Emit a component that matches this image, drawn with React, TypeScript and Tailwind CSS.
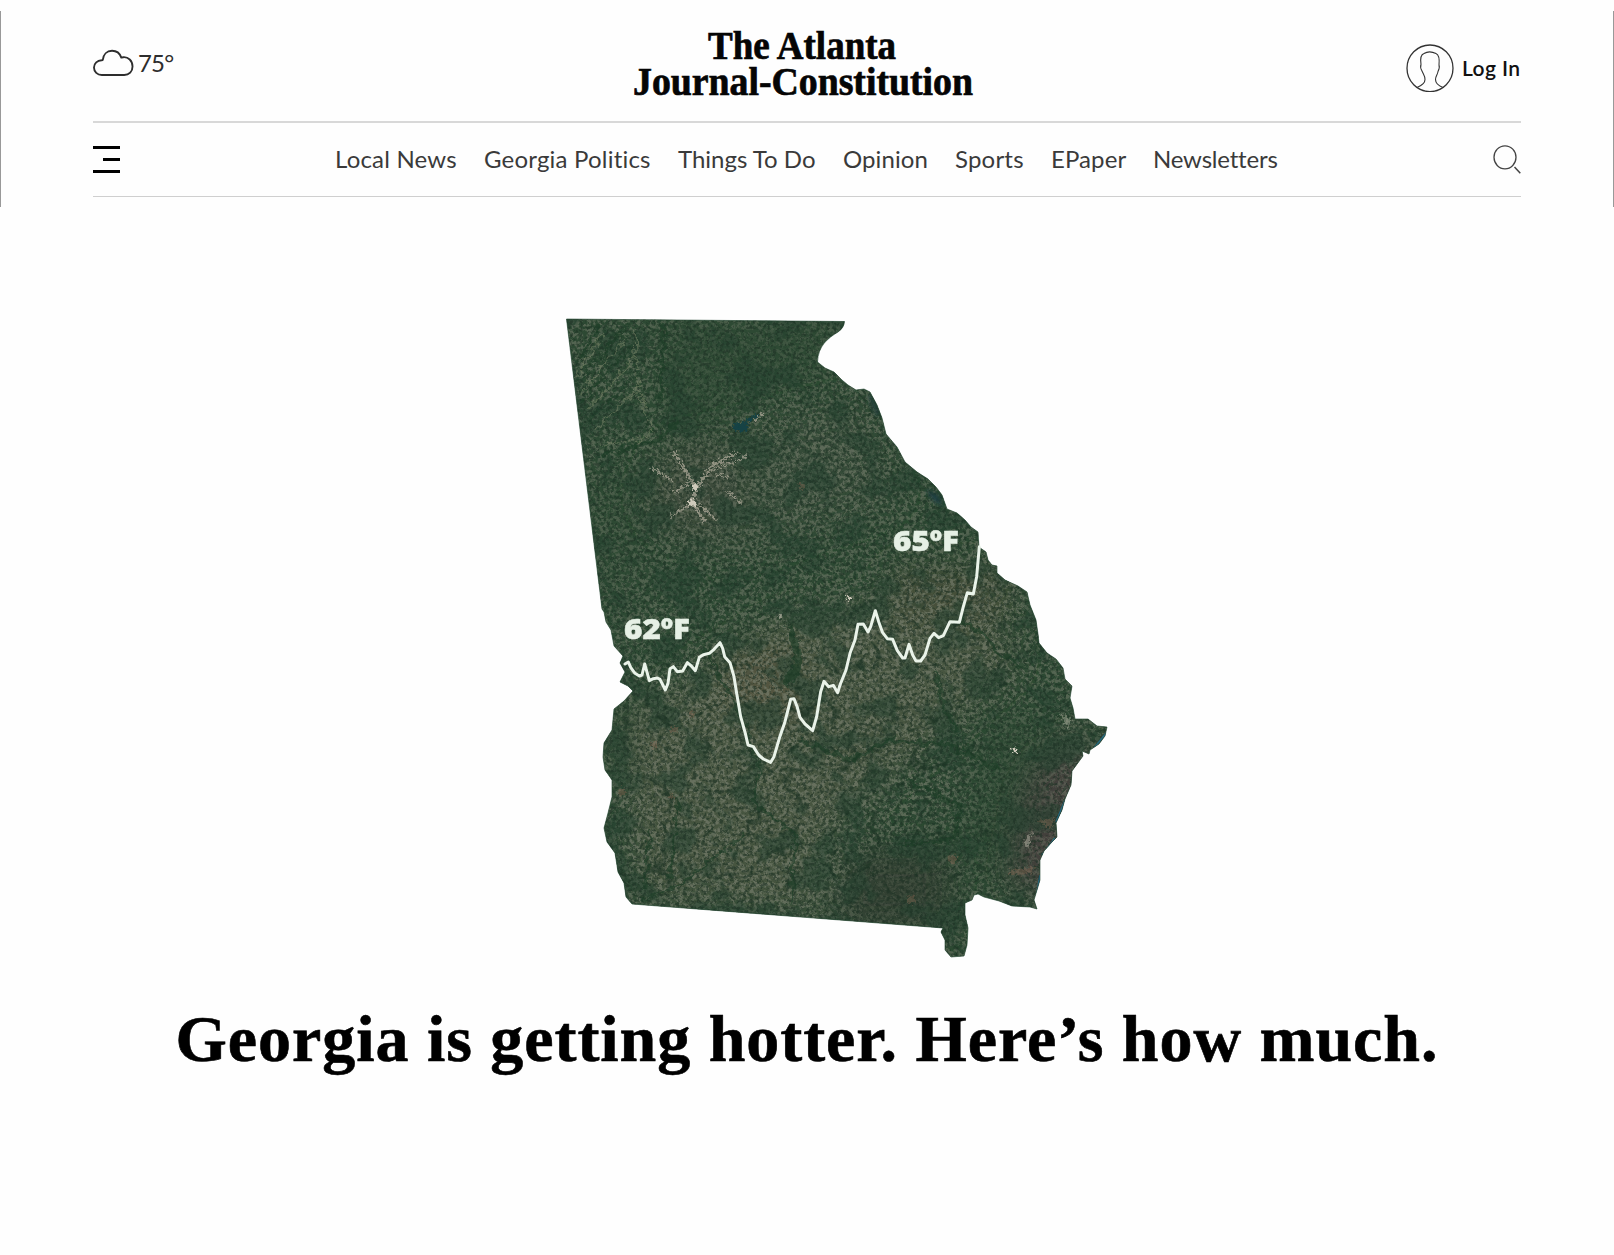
import React from 'react';

const NAV: { label: string; width: string; spacing: string }[] = [
  { label: 'Local News', width: 'w-[122px]', spacing: 'tracking-[0.2px]' },
  { label: 'Georgia Politics', width: 'w-[167px]', spacing: 'tracking-[0.2px]' },
  { label: 'Things To Do', width: 'w-[138px]', spacing: 'tracking-[0px]' },
  { label: 'Opinion', width: 'w-[85px]', spacing: 'tracking-[0.1px]' },
  { label: 'Sports', width: 'w-[69px]', spacing: 'tracking-[0.2px]' },
  { label: 'EPaper', width: 'w-[75px]', spacing: 'tracking-[0.1px]' },
  { label: 'Newsletters', width: 'w-[126px]', spacing: 'tracking-[-0.2px]' },
];

const STATE =
  'M566.5 319 L844.5 321.5 Q844 328 838 332 C828 338 818 346 817.5 362 L825 368 834 372 842 380 848 385 856 390 864 389 870 392 877 405 882 418 886 434 897 447 905 462 917 472 928 479 936 487 942 495 947 509 957 513 965 520 971 527 978 532 979 547 986 552 988 560 992 565 997 566 997 573 1005 580 1018 586 1027 592 1030 605 1036 620 1038 634 1039 643 1047 653 1056 659 1063 668 1065 679 1072 686 1070 698 1073 708 1075 719 1088 719 1097 726 1107 727 1105 736 1099 744 1090 750 1089 754 1082 751 1083 756 1072 771 1071 785 1065 799 1062 810 1056 823 1057 837 1052 842 1044 851 1040 860 1040 880 1034 900 1037 909 1030 907 1012 906 999 901 984 897 978 894 974 895 972 900 965 903 965 915 968 928 967 945 964 956 951 957 945 950 945 940 941 932 943 928 L632 904 626 897 624 883 618 872 615 853 607 842 604 828 608 813 612 797 612 780 605 770 603 757 604 743 612 730 614 709 624 701 633 691 628 686 620 682 625 672 620 663 623 656 614 646 611 630 606 622 604 612 602 609 Z';

const TREND =
  'M105 222 L115 216 122 232 135 250 148 258 156 255 164 222 172 250 178 272 190 266 202 264 210 268 226 300 234 280 240 236 250 230 262 245 278 243 292 218 304 228 316 242 328 202 340 194 358 190 372 178 390 158 398 175 404 200 420 218 432 260 440 310 452 380 466 430 474 465 490 470 506 495 520 507 542 517 552 500 568 445 585 395 602 328 612 326 622 352 630 382 645 402 668 422 680 380 692 305 702 274 716 290 730 286 743 308 750 285 768 240 780 190 795 150 804 103 820 102 834 126 842 110 856 62 866 95 878 128 892 146 908 148 922 182 938 204 945 204 957 163 968 195 978 213 992 213 1005 195 1020 145 1032 130 1046 143 1060 137 1080 95 1108 97 1120 50 1132 8 1150 12 1160 -40 1168 -130';

function GeorgiaMap() {
  return (
    <svg className="block h-[660px] w-[560px]" viewBox="556 309 560 660" role="img" aria-label="Georgia temperature map">
      <defs>
        <clipPath id="state">
          <path d={STATE} />
        </clipPath>
        <filter id="speckle" x="0" y="0" width="100%" height="100%" colorInterpolationFilters="sRGB">
          <feTurbulence type="fractalNoise" baseFrequency="0.24" numOctaves="4" seed="7" />
          <feColorMatrix values="0 0 0 0 0.46  0 0 0 0 0.49  0 0 0 0 0.42  5 0 0 0 -2.1" />
        </filter>
        <filter id="pits" x="0" y="0" width="100%" height="100%" colorInterpolationFilters="sRGB">
          <feTurbulence type="fractalNoise" baseFrequency="0.3" numOctaves="4" seed="21" />
          <feColorMatrix values="0 0 0 0 0.12  0 0 0 0 0.2  0 0 0 0 0.15  0 6 0 0 -3" />
        </filter>
        <filter id="patches" x="0" y="0" width="100%" height="100%" colorInterpolationFilters="sRGB">
          <feTurbulence type="fractalNoise" baseFrequency="0.03" numOctaves="5" seed="4" />
          <feColorMatrix values="0 0 0 0 0.15  0 0 0 0 0.26  0 0 0 0 0.19  0 0 8 0 -4" />
        </filter>
        <filter id="veins" x="0" y="0" width="100%" height="100%" colorInterpolationFilters="sRGB">
          <feTurbulence type="turbulence" baseFrequency="0.024" numOctaves="3" seed="12" />
          <feColorMatrix values="0 0 0 0 0.11  0 0 0 0 0.2  0 0 0 0 0.14  -14 0 0 0 1.8" />
        </filter>
        <filter id="soft" x="-50%" y="-50%" width="200%" height="200%">
          <feGaussianBlur stdDeviation="16" />
        </filter>
        <filter id="fine" x="-50%" y="-50%" width="200%" height="200%">
          <feGaussianBlur stdDeviation="2" />
        </filter>
        <filter id="rough" x="-20%" y="-20%" width="140%" height="140%">
          <feTurbulence type="fractalNoise" baseFrequency="0.14" numOctaves="3" seed="3" />
          <feDisplacementMap in="SourceGraphic" scale="13" xChannelSelector="R" yChannelSelector="G" />
        </filter>
        <filter id="grain" x="-20%" y="-20%" width="140%" height="140%">
          <feTurbulence type="fractalNoise" baseFrequency="0.4" numOctaves="2" seed="9" />
          <feDisplacementMap in="SourceGraphic" scale="9" xChannelSelector="R" yChannelSelector="G" />
        </filter>
        <mask id="density" maskUnits="userSpaceOnUse" x="556" y="309" width="560" height="660">
          <rect x="556" y="309" width="560" height="660" fill="#c4c4c4" />
          <g filter="url(#soft)">
            <path d="M665 320H845V370L760 390 690 440 660 400Z" fill="#5a5a5a" />
            <path d="M585 470H640V590H600Z" fill="#888" />
            <path d="M640 700L780 610 1010 560 1035 670 960 720 950 800 860 830 820 910 640 900 610 830Z" fill="#fff" />
            <path d="M860 850H950V930H840Z" fill="#4c4c4c" />
            <path d="M990 700L1060 740 1040 900 960 860Z" fill="#666" />
            <path d="M600 690H640V770H605Z" fill="#777" />
            <path d="M780 420L880 420 900 500 780 520Z" fill="#e0e0e0" />
          </g>
        </mask>
        <mask id="south" maskUnits="userSpaceOnUse" x="556" y="309" width="560" height="660">
          <path d="M610 690L760 620 1010 560 1040 690 980 900 620 900Z" fill="#fff" filter="url(#soft)" />
        </mask>
      </defs>

      <g clipPath="url(#state)">
        <rect x="556" y="309" width="560" height="660" fill="#2d4933" />
        <g filter="url(#soft)">
          <path d="M620 720L780 620 960 590 1020 660 930 740 830 830 820 910 640 900Z" fill="#46543f" />
          <path d="M730 650H800V720H730Z" fill="#52553f" />
          <path d="M660 450L860 400 900 500 720 560Z" fill="#344c38" />
          <circle cx="693" cy="492" r="46" fill="#3e4b3b" />
          <path d="M890 570H1010V620H890Z" fill="#474f3b" />
          <path d="M850 850H950V930H830Z" fill="#314031" />
          <path d="M1080 730L1090 790 1060 900 1010 880 1030 780Z" fill="#45413c" />
        </g>
        <g mask="url(#density)">
          <rect x="556" y="309" width="560" height="660" filter="url(#speckle)" opacity="0.7" />
        </g>
        <rect x="556" y="309" width="560" height="660" filter="url(#patches)" opacity="0.55" />
        <rect x="556" y="309" width="560" height="660" filter="url(#pits)" opacity="0.6" />
        <g mask="url(#south)">
          <rect x="556" y="309" width="560" height="660" filter="url(#veins)" opacity="0.6" />
        </g>

        <g fill="none" stroke="#1e3c28" strokeWidth="2.2" opacity="0.6" filter="url(#rough)">
          <path d="M572 370L600 325M577 385L620 330M582 400L632 345M590 420L640 370M600 360L628 325" />
          <path d="M600 455L655 442 680 420 M664 325L660 400" strokeWidth="4" />
          <path d="M700 640L745 725 760 770 752 800 795 835 792 905" strokeWidth="3" />
          <path d="M790 625L800 665 784 685" strokeWidth="9" />
          <path d="M800 740L850 760 890 740 950 745 1000 770" strokeWidth="4.5" />
          <path d="M960 620L985 635 1000 655 1022 665" strokeWidth="4.5" />
          <path d="M935 670L945 710 960 735" strokeWidth="4" />
          <path d="M640 900L680 885 710 860 745 835M645 890L650 830M670 880L678 800" strokeWidth="3" />
          <path d="M905 780L960 805 955 840 900 845" strokeWidth="3.5" />
        </g>
        <g fill="none" stroke="#7b8769" strokeWidth="1.5" opacity="0.5" filter="url(#rough)">
          <path d="M575 378L604 332M582 393L624 340M588 410L636 356M594 430L642 385M635 330L638 390 655 435M600 445L640 440 655 430" />
        </g>

        <ellipse cx="741" cy="427" rx="8" ry="5" fill="#174344" filter="url(#grain)" />
        <path d="M735 428L758 415" stroke="#174344" strokeWidth="3" filter="url(#grain)" />
        <path d="M926 490L936 494 944 506 934 501Z" fill="#1d3d42" filter="url(#fine)" />
        <path d="M870 396L878 415" stroke="#1d3a3e" strokeWidth="4" opacity="0.7" filter="url(#fine)" />

        <g fill="none" stroke="#a9a595" filter="url(#grain)" strokeLinecap="round" opacity="0.75">
          <path d="M674 452L686 472 697 488 692 503 704 520M697 488L712 466 736 453" strokeWidth="3" />
          <path d="M692 503L672 516M652 468L672 480M675 492L690 482M728 492L742 503M712 470L748 456M700 505L716 520M730 478L716 474M755 420L764 413" strokeWidth="1.8" />
        </g>
        <g fill="#cfcabb" filter="url(#grain)">
          <ellipse cx="692" cy="503" rx="4" ry="3.5" />
          <circle cx="695" cy="487" r="3" />
          <circle cx="849" cy="599" r="2" />
          <circle cx="1015" cy="750" r="2.5" />
          <path d="M1024 840L1032 832 1028 850Z" opacity="0.4" />
          <path d="M1058 713L1072 720 1068 728Z" opacity="0.35" />
          <circle cx="780" cy="616" r="2" opacity="0.6" />
        </g>
        <g fill="#8a6a55" filter="url(#grain)" opacity="0.4">
          <circle cx="692" cy="714" r="3" />
          <circle cx="674" cy="730" r="3.5" />
          <circle cx="655" cy="745" r="3.5" />
          <circle cx="622" cy="792" r="4" />
          <circle cx="671" cy="797" r="2.5" />
          <circle cx="953" cy="859" r="4.5" />
          <circle cx="911" cy="900" r="4" />
          <circle cx="802" cy="486" r="3" />
          <path d="M1010 870L1035 867 1030 874 1010 875ZM1037 821L1056 818 1050 828Z" />
        </g>
        <path d="M1107 732L1090 753M1065 800L1056 822M1055 838L1042 855M1040 875L1036 898" stroke="#1f6f92" strokeWidth="1.5" fill="none" opacity="0.8" />
      </g>
      <path d={STATE} fill="none" stroke="#22432f" strokeWidth="0.6" />

      <g transform="translate(590 590) scale(0.33333)">
        <path d={TREND} fill="none" stroke="#eaf3e9" strokeWidth="9" strokeLinejoin="round" strokeLinecap="round" />
      </g>
      <g fill="#e6f0e5" stroke="#e6f0e5" strokeWidth="0.5" fontFamily="'Open Sans', 'Noto Sans', sans-serif" fontWeight="800" fontSize="28.5">
        <text x="624" y="639" textLength="66" lengthAdjust="spacingAndGlyphs">62ºF</text>
        <text x="893" y="550.5" textLength="66" lengthAdjust="spacingAndGlyphs">65ºF</text>
      </g>
    </svg>
  );
}

function Masthead() {
  return (
    <svg className="block h-[88px] w-[344px] overflow-visible" viewBox="631 20 344 88" role="img" aria-label="The Atlanta Journal-Constitution">
      <g fill="#050505" stroke="#050505" strokeWidth="0.7" fontFamily="'Liberation Serif', serif" fontWeight="700">
        <text x="707" y="59" fontSize="39" textLength="188" lengthAdjust="spacingAndGlyphs">The Atlanta</text>
        <text x="632" y="95" fontSize="39" textLength="340" lengthAdjust="spacingAndGlyphs">Journal-Constitution</text>
      </g>
    </svg>
  );
}

export default function App() {
  return (
    <div className="flex h-[1255px] w-[1614px] flex-col overflow-hidden bg-[#fefefe] pt-[11px] font-['Lato','Open_Sans',sans-serif]">
      <header className="flex h-[196px] flex-col border-x border-[#999] px-[92px]">
        <div className="grid h-[112px] shrink-0 grid-cols-[1fr_344px_1fr] border-b-2 border-[#d8d8d8]">
          <div className="flex items-start pt-[38px] text-[#2d2d2d]">
            <svg className="h-[28px] w-[41px]" viewBox="0 0 42 28" preserveAspectRatio="none" fill="none" stroke="currentColor" strokeWidth="1.9">
              <path d="M9 26H32C37 26 40.5 22.5 40.5 17.5 40.5 11.5 36 7.8 31 8.2L29 8.6C27.5 4.5 24 1.8 19.5 1.8 14.2 1.8 10.5 5.5 10 11L8.8 11.2C4.5 11.4 1 14.4 1 18.6 1 22.8 4.5 26 9 26Z" strokeLinejoin="round" />
            </svg>
            <span className="ml-[4px] text-[24px] leading-[28px] tracking-[-0.8px]">75°</span>
          </div>
          <div className="pt-[9px] -ml-[3px]">
            <Masthead />
          </div>
          <div className="flex items-start justify-end pt-[33px]">
            <svg className="h-[48px] w-[48px]" viewBox="0 0 48 48" fill="none" stroke="#333" strokeWidth="1.3">
              <ellipse cx="24" cy="24.3" rx="23" ry="23.3" />
              <path d="M11 43.5C16 41.5 19 39 19 35.5 19 31.5 17.5 30.5 16 27 14.5 24.5 14.2 22.5 15 20.5 14 14 15 10.5 18 9.5 22 7 27 8 30 9.5 33.5 11 33.5 16 33 21 33.8 23 33 25.5 32 27.5 31.5 31 29.5 32 29.5 35.5 29.5 39 32 41.5 37 43.5" strokeWidth="1.1" />
            </svg>
            <span className="ml-[8px] w-[59px] whitespace-nowrap pt-[10px] font-['Lato'] text-[21px] font-semibold leading-[28px] tracking-[0.4px] text-[#111]">Log In</span>
          </div>
        </div>
        <div className="flex h-[74px] shrink-0 items-center justify-between border-b border-[#cfcfcf]">
          <button className="flex h-[27px] w-[27px] flex-col items-end justify-between" aria-label="Menu">
            <span className="h-[3px] w-[27px] bg-black" />
            <span className="h-[3px] w-[17px] bg-black" />
            <span className="h-[3px] w-[27px] bg-black" />
          </button>
          <nav className="-mt-[2px] ml-[1px] flex gap-[27px] text-[24px] leading-[30px] text-[#3a3a3a]">
            {NAV.map((item) => (
              <a key={item.label} className={`whitespace-nowrap ${item.width} ${item.spacing}`}>
                {item.label}
              </a>
            ))}
          </nav>
          <svg className="h-[29px] w-[28px]" viewBox="0 0 28 29" fill="none" stroke="#444" strokeWidth="1.3">
            <ellipse cx="12" cy="12.3" rx="11" ry="11.5" />
            <path d="M21.5 22L27.3 28.3" strokeWidth="1.5" />
          </svg>
        </div>
      </header>
      <main className="flex flex-col items-center">
        <div className="mt-[102px] ml-[58px]">
          <GeorgiaMap />
        </div>
        <h1 className="mt-[32px] whitespace-nowrap text-center font-['Liberation_Serif',serif] text-[66px] font-bold leading-[76px] tracking-[0.95px] text-black [-webkit-text-stroke:0.6px_black]">
          Georgia is getting hotter. Here’s how much.
        </h1>
      </main>
    </div>
  );
}
